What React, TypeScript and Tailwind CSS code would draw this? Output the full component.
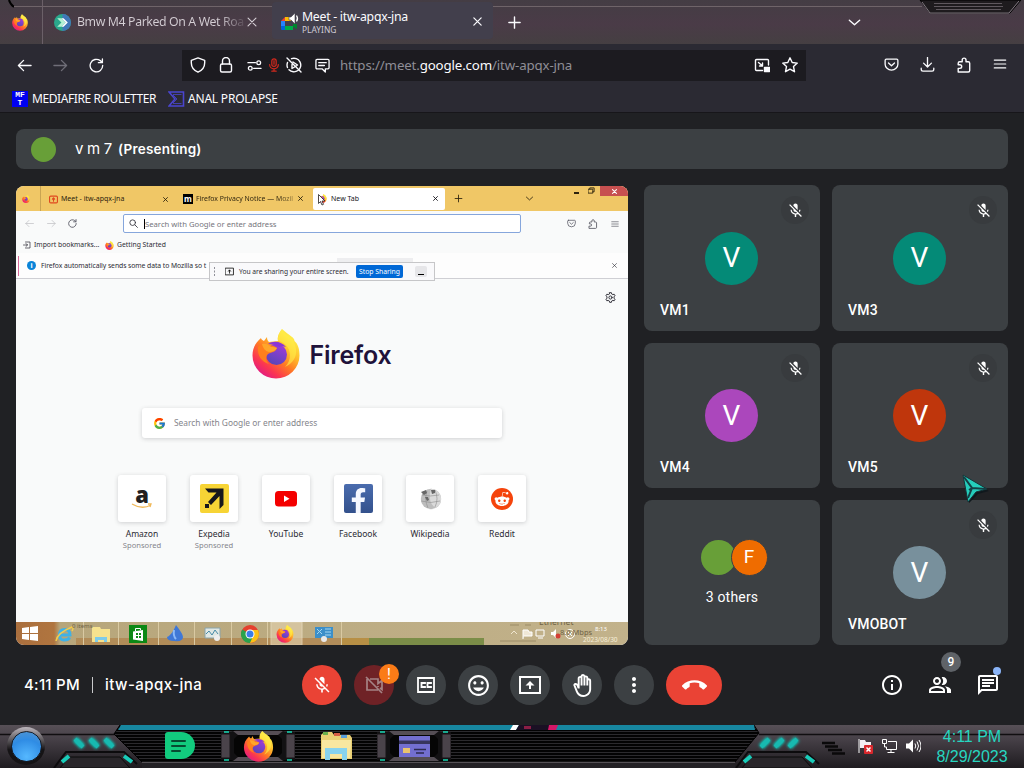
import { useId, type ReactNode } from 'react'
import {
  MdCallEnd,
  MdMicOff,
  MdMoreVert,
  MdOutlineBackHand,
  MdOutlineChat,
  MdOutlineInfo,
  MdOutlineMood,
  MdOutlinePeopleAlt,
} from 'react-icons/md'
import { FcGoogle } from 'react-icons/fc'
import { FaFacebookF, FaRedditAlien } from 'react-icons/fa'

function Stroke({ size = 16, width = 1.4, className, children }: { size?: number; width?: number; className?: string; children: ReactNode }) {
  return (
    <svg
      width={size}
      height={size}
      viewBox="0 0 16 16"
      fill="none"
      stroke="currentColor"
      strokeWidth={width}
      strokeLinecap="round"
      strokeLinejoin="round"
      className={`shrink-0 ${className ?? ''}`}
    >
      {children}
    </svg>
  )
}

const glyphs = {
  back: <path d="M15 8H1.5M7 2.5 1.5 8 7 13.5" />,
  forward: <path d="M1 8h13.5M9 2.5 14.5 8 9 13.5" />,
  reload: <path d="M14.6 8A6.7 6.7 0 1 1 12 2.8l2 1.7M14.3 1v4H10" />,
  close: <path d="m3.5 3.5 9 9m0-9-9 9" />,
  plus: <path d="M8 2v12M2 8h12" />,
  chevron: <path d="m2.5 5.5 5.5 5 5.5-5" />,
  menu: <path d="M1.5 3.500h13M1.500 8h13M1.500 12.500h13" />,
  shield: <path d="M8 .9 1.300 3.300v2.500c0 4.400 2.500 7.600 6.700 9.400 4.200-1.800 6.700-5 6.700-9.400V3.300z" />,
  pocket: (
    <>
      <path d="M2.500 2.300h11c.8 0 1.300.5 1.300 1.300v4a6.800 6.300 0 0 1-13.600 0v-4c0-.8.5-1.300 1.300-1.300z" />
      <path d="M4.800 6.300 8 9.300l3.200-3" />
    </>
  ),
  download: <path d="M8 .5v10M3.800 6.500 8 10.700l4.200-4.200M1.300 12v1c0 1.200.7 2 1.900 2h9.600c1.200 0 1.900-.8 1.900-2v-1" />,
  puzzle: (
    <path d="M2.200 15h10c.9 0 1.500-.6 1.500-1.500V6.300c0-.9-.6-1.500-1.500-1.500H10V3a1.900 1.900 0 0 0-3.800 0v1.800H3.700c-.9 0-1.500.6-1.500 1.500v1.500h1.700a1.800 1.800 0 0 1 0 3.600H2.200z" />
  ),
  search: (
    <>
      <circle cx="6.500" cy="6.500" r="5" />
      <path d="m10.500 10.500 4.500 4.500" />
    </>
  ),
}

function FirefoxLogo({ width, height }: { width: number; height: number }) {
  const id = useId()
  return (
    <svg width={width} height={height} viewBox="0 0 48 50" className="shrink-0">
      <defs>
        <linearGradient id={`${id}a`} x1=".85" y1=".1" x2=".2" y2=".95">
          <stop offset="0" stopColor="#fff44f" />
          <stop offset=".3" stopColor="#ffc02c" />
          <stop offset=".55" stopColor="#ff7a24" />
          <stop offset=".8" stopColor="#fb3650" />
          <stop offset="1" stopColor="#e01a86" />
        </linearGradient>
        <linearGradient id={`${id}b`} x1=".8" y1="0" x2=".3" y2="1">
          <stop offset="0" stopColor="#a33bd9" />
          <stop offset="1" stopColor="#5446b8" />
        </linearGradient>
      </defs>
      <path
        fill={`url(#${id}a)`}
        d="M9 9C3 14 .5 20 .5 26.500a23.500 23 0 0 0 47 0C47.500 20 46 15 42.500 12c0-4-5-5-12.500-12-3 4-5 7-4 12l-9 1c-1-1-2-2-2-5l-3 4c-2-1-3-2-3-3z"
      />
      <path fill="#fff04a" opacity=".6" d="M30 0c-3 4-5 8-4 12 7 1 12 7 12 14 0 5-2 9-5 12 8-4 12-10 11-18-1-5-2-8-4-10C35 6 31 4 30 0z" />
      <ellipse cx="24.500" cy="25.500" rx="10.500" ry="10.500" fill={`url(#${id}b)`} />
      <path fill="#8b35d6" d="M16 15c6-4 14-2 18 3-3-1-5-1-7 0-4-2-8-3-11-3z" />
      <path fill="#ff7f1c" d="M6 18c4-4 8-3 12-1 3-1 4 0 7 2-1 4-5 4-9 6-3 3-2 7 1 10-7-2-12-8-11-17z" />
      <path fill="#ffa62a" d="M10 15c4-1 7 1 9 3 2 0 5 0 6 1-2 3-5 4-8 4-4-1-6-4-7-8z" />
    </svg>
  )
}

/* Outer browser */

function TabStrip() {
  return (
    <div className="relative flex h-11 items-center bg-[linear-gradient(#443d44,#4a3b47_55%,#453f42)] text-[#fbfbfe]">
      <svg className="absolute inset-0" width="1024" height="44">
        <path d="M9 0q1 4 5 7" stroke="#000" strokeWidth="2" fill="none" />
        <path d="M14 6.500h258M492 6.500h430" stroke="#6f6469" />
        <path d="M920 0l10 13h80l11-13z" fill="#1e1b1e" stroke="#000" />
        <path d="M922 2l8 11h79l10-12" stroke="#837a82" fill="none" />
        <path d="M934 3.500h68M934 6.500h69M936 9.500h65" stroke="#5f585e" />
      </svg>
      <div className="relative flex h-11 w-[43px] items-center justify-center border-r border-[#6b6068] pr-[2px]">
        <FirefoxLogo width={16} height={17} />
      </div>
      <div className="relative ml-[11px] flex h-11 w-[218px] items-center">
        <svg width="17" height="17" viewBox="0 0 16 16">
          <circle cx="8" cy="8" r="8" fill="#2aa88c" />
          <path d="M8 0a8 8 0 0 1 0 16z" fill="#4177b8" />
          <path d="M3 4h4l4 4-4 4H3l4-4z" fill="#b5f0d4" />
          <path d="M7 4h2l4 4-4 4H7l4-4z" fill="#fff" />
        </svg>
        <span className="ml-[6px] w-[167px] whitespace-nowrap bg-[linear-gradient(90deg,#d5cfd5_85%,#d5cfd520)] bg-clip-text text-[12.300px] tracking-[-0.380px] text-transparent">
          Bmw M4 Parked On A Wet Roa
        </span>
        <Stroke size={14} width={1.300} className="ml-px text-[#d5cfd5]">{glyphs.close}</Stroke>
      </div>
      <div className="relative mb-1 flex h-[37px] w-[221px] items-center rounded bg-[#423f4c] pl-2">
        <svg width="20" height="18" viewBox="0 0 20 18" className="mt-[3px]">
          <path d="M1 8l4-4v4z" fill="#ea4335" />
          <path d="M5 4h6v4H5z" fill="#fbbc04" />
          <path d="M1 8h4v5H1z" fill="#2684fc" />
          <path d="M1 13h4v4H2q-1 0-1-1z" fill="#0066da" />
          <path d="M5 13h8v4H5z" fill="#00ac47" />
          <path d="M13 11l4 0v5l-4-2z" fill="#00832d" />
          <path d="M9 4h2l4-4v11l-4-4H9z" fill="#fff" stroke="#423f4c" strokeWidth=".6" />
          <path d="M16.500 2.500q2 3 0 6" stroke="#fff" strokeWidth="1.300" fill="none" />
        </svg>
        <div className="ml-[2px] flex-1 pt-[5px]">
          <p className="text-[12.300px] leading-[15px] tracking-[-0.280px]">Meet - itw-apqx-jna</p>
          <p className="text-[8.400px] leading-[12px] text-[#cfcbd6]">PLAYING</p>
        </div>
        <Stroke size={13} width={1.500} className="mr-[9px] mt-[3px]">{glyphs.close}</Stroke>
      </div>
      <Stroke size={15} width={1.500} className="relative ml-[14px] mt-px">{glyphs.plus}</Stroke>
      <Stroke size={15} width={1.500} className="relative ml-[325px]">{glyphs.chevron}</Stroke>
    </div>
  )
}

function NavBar() {
  return (
    <div className="flex h-[42px] items-center bg-[#2b2a33] px-[6px] text-[#fbfbfe]">
      <div className="flex w-9 justify-center"><Stroke size={15}>{glyphs.back}</Stroke></div>
      <div className="flex w-9 justify-center text-[#6f6e78]"><Stroke size={15}>{glyphs.forward}</Stroke></div>
      <div className="flex w-9 justify-center"><Stroke size={15}>{glyphs.reload}</Stroke></div>
      <div className="ml-[68px] flex h-[31px] w-[624px] items-center bg-[#1c1b20]">
        <div className="flex w-8 justify-center"><Stroke>{glyphs.shield}</Stroke></div>
        <div className="flex w-6 justify-center">
          <Stroke><rect x="2.500" y="7" width="11" height="8" rx="1.500" /><path d="M4.500 7V4a3.500 3.500 0 0 1 7 0v3" /></Stroke>
        </div>
        <div className="flex w-8 justify-center">
          <Stroke size={15}><path d="M1 5h8M7 11h8" /><circle cx="12.500" cy="5" r="2" /><circle cx="3.500" cy="11" r="2" /></Stroke>
        </div>
        <div className="flex w-2 justify-center text-[#d0281c]">
          <Stroke size={14}><rect x="5.500" y="1" width="5" height="8.500" rx="2.500" /><path d="M3 7.500a5 5 0 0 0 10 0M8 12.500V15M5.500 15h5M8 3v4" /></Stroke>
        </div>
        <div className="flex w-8 justify-center">
          <Stroke size={16}><path d="M1 1l14 14M5.500 1.700A6.800 6.800 0 1 1 3 12.700M1.500 5.500a7 7 0 0 0 0 5M7 5l4.500 3-1.500 1M6 7.500v4l2.500-1.500" /></Stroke>
        </div>
        <div className="flex w-6 justify-center">
          <Stroke size={15}><path d="M2.200 1.500h11.600c.7 0 1.200.5 1.200 1.200v7.600c0 .7-.5 1.200-1.200 1.200H11V15l-3.500-3.500H2.200c-.7 0-1.200-.5-1.200-1.200V2.700c0-.7.5-1.200 1.200-1.200zM4 5h8M4 8h6" /></Stroke>
        </div>
        <p className="ml-[6px] flex-1 pt-px text-[13.300px] tracking-[-0.150px] text-[#8f8e96]">
          https://meet.<span className="text-[#fbfbfe]">google.com</span>/itw-apqx-jna
        </p>
        <div className="flex w-7 justify-center">
          <Stroke><path d="M8.500 13.500h-6c-.6 0-1-.4-1-1v-9c0-.6.4-1 1-1h11c.6 0 1 .4 1 1V8M4.500 5.500 8.500 9M8.500 6v3H5.500" /><rect x="10.500" y="10.500" width="5" height="4" fill="currentColor" /></Stroke>
        </div>
        <div className="mr-[2px] flex w-7 justify-center">
          <Stroke><path d="m8 .8 2.200 4.700 5.100.6-3.800 3.500 1 5.100L8 12.200l-4.500 2.500 1-5.100L.7 6.100l5.100-.6z" /></Stroke>
        </div>
      </div>
      <div className="ml-auto flex pb-px">
        <div className="flex w-9 justify-center pr-px"><Stroke size={15}>{glyphs.pocket}</Stroke></div>
        <div className="flex w-9 justify-center pr-px"><Stroke size={15}>{glyphs.download}</Stroke></div>
        <div className="flex w-9 justify-center"><Stroke>{glyphs.puzzle}</Stroke></div>
        <div className="flex w-9 justify-center"><Stroke size={14}>{glyphs.menu}</Stroke></div>
      </div>
    </div>
  )
}

function BookmarksBar() {
  return (
    <div className="flex h-[27px] items-center border-b border-[#17161a] bg-[#2b2a33] pl-3 text-[12px] text-[#fbfbfe]">
      <div className="h-4 w-4 bg-[#0000f0] text-center font-['Liberation_Mono'] text-[8px] font-bold leading-[8px]">
        <p className="leading-[8px]">MF</p>
        <p className="leading-[8px]">T</p>
      </div>
      <span className="ml-1 w-[136px] whitespace-nowrap tracking-[-0.410px]">MEDIAFIRE ROULETTER</span>
      <svg width="17" height="16" viewBox="0 0 17 16" fill="none" stroke="#4a45cf" strokeWidth="1.600">
        <path d="M1 1h14.500v14H1l6-7z" />
        <path d="M5 3.500h8.500M5 12.500h8.500M5 4l4 4-4 4" strokeWidth=".8" />
      </svg>
      <span className="ml-[3px] whitespace-nowrap tracking-[-0.200px]">ANAL PROLAPSE</span>
    </div>
  )
}

/* Shared screen */

function SharedTabs() {
  return (
    <div className="flex h-[25px] items-center bg-[#f0c766] text-[6.800px] text-[#2c220d]">
      <div className="flex h-full w-[25px] items-center justify-center border-r border-[#c9a452] pr-1">
        <FirefoxLogo width={8} height={8} />
      </div>
      <div className="flex w-[142px] items-center pl-2 pt-px">
        <Stroke size={9} width={2} className="text-[#e0491f]"><rect x="1" y="2" width="14" height="12" rx="2" /><path d="M8 11V6M6 7.500 8 5l2 2.500" /></Stroke>
        <span className="ml-[3px] flex-1 whitespace-nowrap text-[7px]">Meet - itw-apqx-jna</span>
        <Stroke size={7} width={2} className="mr-[14px]">{glyphs.close}</Stroke>
      </div>
      <div className="flex w-[130px] items-center pt-px">
        <span className="flex h-[10px] w-[10px] items-center justify-center bg-black text-[8px] font-bold leading-none text-white">m</span>
        <span className="ml-[3px] w-[101px] whitespace-nowrap bg-[linear-gradient(90deg,#2c220d_80%,#2c220d50)] bg-clip-text text-[6.900px] text-transparent">
          Firefox Privacy Notice — Mozil
        </span>
        <Stroke size={7} width={2}>{glyphs.close}</Stroke>
      </div>
      <div className="flex h-[22px] w-[132px] items-center rounded-[2px] bg-white pl-[5px] text-[#15141a]">
        <span className="relative flex w-[9px]">
          <FirefoxLogo width={9} height={9} />
          <svg className="absolute left-0 top-0" width="8" height="12" viewBox="0 0 8 12">
            <path d="M.5.5v9l2-2 1.500 3.500 1.500-.7L4 7h3z" fill="#fff" stroke="#222" strokeWidth=".8" />
          </svg>
        </span>
        <span className="ml-1 flex-1 whitespace-nowrap pt-px text-[7px]">New Tab</span>
        <Stroke size={7} width={2} className="mr-[6px]">{glyphs.close}</Stroke>
      </div>
      <Stroke size={9} width={1.500} className="ml-[9px]">{glyphs.plus}</Stroke>
      <Stroke size={9} width={1.500} className="ml-[62px]">{glyphs.chevron}</Stroke>
      <div className="ml-auto flex h-full items-start">
        <span className="mr-[9px] mt-[6px] h-[1.500px] w-[5px] bg-[#2c220d]" />
        <Stroke size={7} width={2} className="mr-[5px] mt-[1px]"><path d="M1 5h10v9H1zM4 5V2h10v9h-3" /></Stroke>
        <span className="flex h-[10px] w-[28px] items-center justify-center bg-[#c75050] text-white">
          <Stroke size={7} width={2.500}>{glyphs.close}</Stroke>
        </span>
      </div>
    </div>
  )
}

function SharedToolbar() {
  return (
    <div className="flex h-[25px] items-center text-[#5b5b66]">
      <Stroke size={9} className="ml-[9px] text-[#c4c4c8]">{glyphs.back}</Stroke>
      <Stroke size={9} className="ml-[13px] text-[#c4c4c8]">{glyphs.forward}</Stroke>
      <Stroke size={9} width={1.600} className="ml-[12px]">{glyphs.reload}</Stroke>
      <div className="ml-[46px] flex h-[19px] w-[398px] items-center rounded-[2px] border-[1.500px] border-[#86a6dc] bg-white pl-[5px]">
        <Stroke size={9} width={1.600} className="text-[#3b3b44]">{glyphs.search}</Stroke>
        <span className="ml-[6px] border-l border-black text-[7.700px] leading-[10px] text-[#75757c]">Search with Google or enter address</span>
      </div>
      <Stroke size={9} className="ml-[46px]">{glyphs.pocket}</Stroke>
      <Stroke size={10} className="ml-[12px]">{glyphs.puzzle}</Stroke>
      <Stroke size={8} className="ml-[13px]">{glyphs.menu}</Stroke>
    </div>
  )
}

function SharedNotices() {
  return (
    <>
      <div className="flex h-[17px] items-center pt-px text-[6.800px] text-[#2b2a33]">
        <Stroke size={8} className="ml-[7px]"><path d="M5 2h9v12H5M1 8h8M6 5l3 3-3 3" /></Stroke>
        <span className="ml-[3px] w-[66px] whitespace-nowrap">Import bookmarks...</span>
        <span className="ml-[5px]"><FirefoxLogo width={9} height={9} /></span>
        <span className="ml-[3px] whitespace-nowrap">Getting Started</span>
      </div>
      <div className="relative flex h-[26px] items-center border-b border-[#cfcfd4] bg-[#fdfdfd] text-[6.800px] text-[#2b2a33]">
        <span className="ml-[2px] h-[20px] w-px bg-[#d86a9a]" />
        <span className="ml-[8px] flex h-[9px] w-[9px] items-center justify-center rounded-full bg-[#0a84d8] text-[7px] font-bold leading-none text-white">i</span>
        <span className="ml-[5px] whitespace-nowrap pt-px tracking-[-0.060px]">Firefox automatically sends some data to Mozilla so t</span>
        <Stroke size={7} className="ml-auto mr-[10px]">{glyphs.close}</Stroke>
        <span className="absolute left-[321px] top-[5px] h-1 w-[76px] bg-[#eeeef0]" />
        <div className="absolute left-[193px] top-[9px] flex h-[19px] w-[226px] items-center border border-[#c6c6c8] bg-[#f9f9fb]">
          <svg width="8" height="9" className="ml-px fill-[#8f8f98]"><path d="M3 0h1v2H3zM3 3.500h1v2H3zM3 7h1v2H3z" /></svg>
          <Stroke size={9} className="ml-[6px] text-black"><rect x="1" y="2" width="14" height="12" /><path d="M8 11V6M6 7.500 8 5l2 2.500" /></Stroke>
          <span className="ml-[5px] w-[111px] whitespace-nowrap pt-px text-[6.700px]">You are sharing your entire screen.</span>
          <span className="ml-[6px] flex h-[13px] w-[47px] items-center justify-center whitespace-nowrap rounded-[2px] bg-[#0068d6] pt-px text-white">Stop Sharing</span>
          <span className="ml-[12px] flex h-[11px] w-[12px] items-end justify-center rounded-[2px] bg-[#e6e6e9] pb-[2px]"><i className="h-px w-[6px] bg-black" /></span>
        </div>
      </div>
    </>
  )
}

const shortcuts = [
  {
    name: 'Amazon',
    sponsored: true,
    icon: (
      <span className="flex h-[24px] w-[24px] flex-col items-center">
        <span className="font-['Open_Sans'] text-[22px] font-extrabold leading-[15px] text-[#221f1f]">a</span>
        <svg width="22" height="6" className="mt-px"><path d="M1 1q10 6 19 1M17 1h3l-1 3" stroke="#f0b95a" strokeWidth="1.300" fill="none" /></svg>
      </span>
    ),
  },
  {
    name: 'Expedia',
    sponsored: true,
    icon: (
      <svg width="29" height="29" viewBox="0 0 29 29">
        <rect width="29" height="29" rx="2" fill="#f7d435" />
        <path d="M5 4.500h18.500V21L19.500 25V12L11 21l-3-3 8.500-9.500H8.500zM5 20h4v4H5z" fill="#17171c" />
      </svg>
    ),
  },
  {
    name: 'YouTube',
    icon: (
      <svg width="22" height="16" viewBox="0 0 22 16"><rect width="22" height="15.500" rx="3.500" fill="#f40000" /><path d="M9 4.500v6.500l5.500-3.200z" fill="#fff" /></svg>
    ),
  },
  {
    name: 'Facebook',
    icon: (
      <span className="flex h-[29px] w-[29px] items-end justify-end rounded-[2px] bg-[linear-gradient(#4a6cae,#33518c)] pr-[2px] text-[#f4f7ff]">
        <FaFacebookF size={25} />
      </span>
    ),
  },
  {
    name: 'Wikipedia',
    icon: (
      <svg width="23" height="22" viewBox="0 0 23 22">
        <circle cx="12" cy="11" r="10.200" fill="#bdbdbd" />
        <path d="M12 .8a10.200 10.200 0 0 1 5 19c-5-2-8-9-5-19z" fill="#dadada" />
        <path d="M3 7q8 2 17 0M2 13q10 3 19 0M8 3q-3 8 1 17M16 2q4 9 0 17" stroke="#8d8d8d" strokeWidth=".6" fill="none" />
        <path d="M2 4l5-2 1 3-3 2zM12 2l4 0 0 3-3 1zM6 9l3 0 1 3-2 1z" fill="#666" />
      </svg>
    ),
  },
  {
    name: 'Reddit',
    icon: (
      <span className="flex h-[22px] w-[22px] items-center justify-center rounded-full bg-[#f5440c] text-white"><FaRedditAlien size={16} /></span>
    ),
  },
]

function NewTabPage() {
  return (
    <div className="flex h-[343px] flex-col items-center bg-[#f9fafa]">
      <div className="mt-[13px] flex w-full justify-end pr-[12px]">
        <Stroke size={11} className="text-[#2b2a33]">
          <circle cx="8" cy="8" r="2.300" />
          <path d="M6.700 1h2.600l.5 2 1.500.8 2-.6 1.300 2.300-1.500 1.500v2l1.500 1.500-1.300 2.300-2-.6-1.500.8-.5 2H6.700l-.5-2-1.500-.8-2 .6-1.300-2.300L2.900 9V7L1.400 5.500l1.300-2.300 2 .6L6.200 3z" />
        </Stroke>
      </div>
      <div className="mt-[26px] flex items-center">
        <FirefoxLogo width={48} height={50} />
        <span className="ml-[9px] pt-1 font-['Inter'] text-[25px] font-semibold tracking-[-0.200px] text-[#20123a]">Firefox</span>
      </div>
      <div className="mt-[29px] flex h-[30px] w-[360px] items-center rounded-[3px] bg-white pl-[11px] shadow-[0_1px_4px_rgba(58,57,68,0.22)]">
        <FcGoogle size={13} />
        <span className="ml-[8px] pt-px text-[8.400px] text-[#85858c]">Search with Google or enter address</span>
      </div>
      <div className="mt-[37px] flex gap-6 text-[#2b2a33]">
        {shortcuts.map((site) => (
          <div key={site.name} className="flex w-12 flex-col items-center">
            <div className="flex h-[47px] w-12 items-center justify-center rounded-[3px] bg-white shadow-[0_1px_4px_rgba(58,57,68,0.22)]">{site.icon}</div>
            <p className="mt-[6px] text-[8.500px] leading-[12px]">{site.name}</p>
            {site.sponsored && <p className="text-[7.600px] leading-[11px] text-[#85858c]">Sponsored</p>}
          </div>
        ))}
      </div>
    </div>
  )
}

function SharedTaskbar() {
  return (
    <div className="relative flex h-[23px] items-center bg-[linear-gradient(90deg,#aa6f3e,#b0753f_38px,#b7a67b_44px,#c2b28b)]">
      <svg className="absolute inset-0" width="612" height="23">
        <path d="M60 16h265v7H60z" fill="#ae8049" opacity=".7" />
        <path d="M325 16h30v7h-30z" fill="#b78f45" />
        <path d="M353 16h115v7H353z" fill="#7b8d48" />
        <path d="M67.500 0v23M102.500 0v23M142.500 0v23M178.500 0v23M215.500 0v23M251.500 0v23M325.500 0v23" stroke="#d9c9a2" />
        <path d="M255 0h31v23h-31z" fill="#e5d4b2" opacity=".6" stroke="#f8edd5" />
      </svg>
      <div className="relative flex h-full w-[325px] items-center">
        <svg width="16" height="15" viewBox="0 0 16 15" className="ml-[6px] fill-white"><path d="M0 2l7-1v6H0zM8 1l8-1v7H8zM0 8h7v6l-7-1zM8 8h8v7l-8-1z" /></svg>
        <svg width="19" height="18" viewBox="0 0 19 18" className="ml-[17px]" fill="none">
          <path d="M4.500 10h10.500q0-5.500-5.300-5.500T4.500 10t5.200 5q3.500 0 5-2.500" stroke="#3fb2e6" strokeWidth="3" />
          <path d="M1 16Q2 8 17 2q2 1 0 4" stroke="#f2cc4d" strokeWidth="1.500" />
        </svg>
        <svg width="20" height="18" viewBox="0 0 20 18" className="ml-[17px]"><path d="M1 2h8l1 2h9v13H1z" fill="#f6e28e" /><path d="M4 12h12v5h-3v-2H7v2H4z" fill="#7ecbe8" /></svg>
        <svg width="18" height="18" viewBox="0 0 18 18" className="ml-[18px]">
          <path d="M0 0h18v18H0z" fill="#0c8815" /><path d="M4 6.500l10-1.500v11l-10-1.500z" fill="#fff" /><path d="M6.500 6V3.500h5V5" stroke="#fff" fill="none" /><path d="M7 8h2v2H7zM10 8h2v2h-2zM7 11h2v2H7zM10 11h2v2h-2z" fill="#0c8815" />
        </svg>
        <svg width="17" height="17" viewBox="0 0 17 17" className="ml-[20px]"><path d="M9 0q7 9 7 12 0 5-9 4-7 0-7-4 5-2 9-12z" fill="#3f78d6" /><path d="M7 5q-1 6 2 9" stroke="#8ab9f8" strokeWidth="2" fill="none" /></svg>
        <svg width="18" height="16" viewBox="0 0 18 16" className="ml-[20px]"><path d="M1 2h15v10H1z" fill="#dfe7e4" stroke="#8aa4ab" /><path d="M2 8l3-3 3 4 3-5 3 4" stroke="#478ba8" fill="none" /><circle cx="13" cy="12" r="3" fill="#eee" /></svg>
        <svg width="18" height="18" viewBox="0 0 18 18" className="ml-[19px]">
          <circle cx="9" cy="9" r="9" fill="#e5402e" /><path d="M1.200 4.500A9 9 0 0 0 9 18l4-7z" fill="#2ba24c" /><path d="M17 5a9 9 0 0 1-8 13l4-9-3-4z" fill="#fbc116" /><circle cx="9" cy="9" r="4.500" fill="#fff" /><circle cx="9" cy="9" r="3.500" fill="#3b7de8" />
        </svg>
        <span className="ml-[17px]"><FirefoxLogo width={18} height={18} /></span>
        <svg width="20" height="18" viewBox="0 0 20 18" className="ml-[20px]"><path d="M1 2h18v11H1z" fill="#3c8fc9" /><path d="M3 4l5 5M8 4l-5 5M11 4h6M11 7h6M11 10h6" stroke="#a5d7f0" strokeWidth="1" /><circle cx="10" cy="14" r="3" fill="#e9e9e9" /></svg>
      </div>
      <div className="relative ml-auto flex h-full w-[130px] overflow-hidden">
        <svg className="absolute inset-0" width="130" height="23" fill="none">
          <path d="M12 3h9M27 3h6M2 19h36" stroke="#9c8c66" />
          <path d="M13 12l3-3 3 3" stroke="#efe6cf" />
          <path d="M25 17V8h5l1 2h3v4h-8" stroke="#fff" fill="#efe7d6" /><path d="M38 8h8v6h-8zM40 16h5" stroke="#fff" />
          <path d="M53 10h2l3-3v9l-3-3h-2z" fill="#fff" /><circle cx="60" cy="14" r="2.500" fill="#d33f35" />
          <circle cx="72" cy="12" r="4.500" stroke="#fff" /><path d="M70 10l4 4M74 10l-4 4" stroke="#fff" />
        </svg>
        <span className="absolute left-[41px] top-[-5px] text-[8.500px] leading-[10px] text-[#6f6346]">Ethernet</span>
        <span className="absolute left-[62px] top-[5px] whitespace-nowrap text-[7.500px] leading-[10px] text-[#6f6346]">8.0 Mbps</span>
        <span className="absolute left-[97px] top-[3px] text-[6px] leading-[9px] text-white">8:13</span>
        <span className="absolute left-[85px] top-[13px] text-[6.500px] leading-[9px] text-[#f7efd9]">2023/08/30</span>
      </div>
      <span className="absolute left-[56px] top-0 text-[6px] leading-[8px] text-[#6f6346]">0 items</span>
    </div>
  )
}

/* Call */

const participants = [
  { name: 'VM1', color: 'bg-[#048a77]' },
  { name: 'VM3', color: 'bg-[#048a77]' },
  { name: 'VM4', color: 'bg-[#ab47bc]' },
  { name: 'VM5', color: 'bg-[#bf360c]' },
  { name: 'others', color: '' },
  { name: 'VMOBOT', color: 'bg-[#78909c]' },
]

function ParticipantTile({ name, color }: { name: string; color: string }) {
  if (name === 'others') {
    return (
      <div className="flex flex-col items-center rounded-lg bg-[#3c4043] pt-[39px] text-[14px] text-white">
        <div className="flex pl-1">
          <span className="mt-px h-[35px] w-[35px] rounded-full bg-[#689f38]" />
          <span className="-ml-[5px] flex h-[37px] w-[37px] items-center justify-center rounded-full border border-[#3c4043] bg-[#ef6c00] text-[19px]">F</span>
        </div>
        <p className="mt-[11px] leading-5 tracking-[0.200px]">3 others</p>
      </div>
    )
  }
  return (
    <div className="relative flex items-center justify-center rounded-lg bg-[#3c4043] pr-px text-white">
      <span className={`flex h-[53px] w-[53px] items-center justify-center rounded-full text-[28px] ${color}`}>V</span>
      <span className="absolute right-[11px] top-[11px] flex h-7 w-7 items-center justify-center rounded-full bg-[#383b3e]"><MdMicOff size={17} /></span>
      <span className="absolute bottom-[11px] left-4 text-[14px] font-medium leading-5 tracking-[0.200px]">{name}</span>
    </div>
  )
}

function RoundButton({ children, className = 'bg-[#3c4043] text-white' }: { children: ReactNode; className?: string }) {
  return <div className={`relative flex h-10 w-10 items-center justify-center rounded-full ${className}`}>{children}</div>
}

function CallControls() {
  return (
    <div className="flex h-20 items-center text-white">
      <div className="flex w-[302px] items-center pl-6 font-['Inter'] text-[15px] font-medium">
        <span className="w-[56px] whitespace-nowrap tracking-[0.250px]">4:11 PM</span>
        <span className="ml-[12px] h-4 w-px bg-[#c9cacc]" />
        <span className="ml-[12px] whitespace-nowrap tracking-[0.450px]">itw-apqx-jna</span>
      </div>
      <div className="flex gap-3">
        <RoundButton className="bg-[#ea4335]"><MdMicOff size={20} /></RoundButton>
        <RoundButton className="bg-[#6f2226] text-[#a58385]">
          <svg width="20" height="20" viewBox="0 0 20 20" fill="none" stroke="currentColor" strokeWidth="1.700"><path d="M2 2l16 16M6 4h8v4.500l4-3v9l-2-1.500M14 12v-1M3 4v11h11" /></svg>
          <span className="absolute -right-[5px] -top-[1px] flex h-5 w-5 items-center justify-center rounded-full bg-[#fa7b17] text-[15px] leading-none text-white">!</span>
        </RoundButton>
        <RoundButton>
          <svg width="20" height="18" viewBox="0 0 20 18" fill="none" stroke="currentColor" strokeWidth="1.800"><path d="M2 2h16v14H2z" /><path d="M9 8V7H5.500v4H9v-1M15 8V7h-3.500v4H15v-1" /></svg>
        </RoundButton>
        <RoundButton><MdOutlineMood size={25} /></RoundButton>
        <RoundButton>
          <svg width="24" height="20" viewBox="0 0 24 20"><path d="M2 2h20v16H2z" fill="none" stroke="currentColor" strokeWidth="2" /><path d="M12 6l4.500 4.500H13V14h-2v-3.500H7.500z" fill="currentColor" /></svg>
        </RoundButton>
        <RoundButton><MdOutlineBackHand size={23} /></RoundButton>
        <RoundButton><MdMoreVert size={24} /></RoundButton>
        <div className="flex h-10 w-14 items-center justify-center rounded-full bg-[#ea4335]"><MdCallEnd size={25} /></div>
      </div>
      <div className="ml-auto mr-6 flex gap-6">
        <MdOutlineInfo size={24} />
        <span className="relative">
          <MdOutlinePeopleAlt size={24} />
          <span className="absolute -top-[21px] left-[13px] flex h-5 w-5 items-center justify-center rounded-full bg-[#5f6368] text-[12px] font-medium">9</span>
        </span>
        <span className="relative">
          <MdOutlineChat size={24} />
          <span className="absolute -right-[1px] -top-[6px] h-2 w-2 rounded-full bg-[#8ab4f8]" />
        </span>
      </div>
    </div>
  )
}

function MeetPage() {
  return (
    <main className="h-[612px] bg-[#202124] px-4 pt-4 font-['Roboto',sans-serif]">
      <div className="flex h-10 items-center rounded-lg bg-[#3c4043] pl-[15px] font-['Inter',sans-serif] text-white">
        <span className="h-[25px] w-[25px] rounded-full bg-[#689f38]" />
        <span className="ml-[19px] w-[43px] text-[15px] tracking-[-0.300px]">v m 7</span>
        <span className="text-[13.500px] font-semibold tracking-[0.250px]">(Presenting)</span>
      </div>
      <div className="mt-4 flex h-[460px] gap-4">
        <section className="mt-px h-[459px] w-[612px] overflow-hidden rounded-lg bg-[#f9fafa] font-['Noto_Sans',sans-serif]">
          <SharedTabs />
          <SharedToolbar />
          <SharedNotices />
          <NewTabPage />
          <SharedTaskbar />
        </section>
        <section className="grid w-[364px] grid-cols-2 grid-rows-[146px_145px_145px] gap-3">
          {participants.map((p) => (
            <ParticipantTile key={p.name} {...p} />
          ))}
        </section>
      </div>
      <div className="-mx-4"><CallControls /></div>
    </main>
  )
}

/* Desktop */

function TaskFrame({ children }: { children: ReactNode }) {
  return (
    <div className="relative flex h-8 w-[74px] items-center justify-center">
      <svg className="absolute inset-0" width="74" height="32">
        <path d="M0 2h10l5-2h44l5 2h10v28H64l-5 2H15l-5-2H0z" fill="#121113" />
        <path d="M0 4h9v24H0zM65 4h9v24h-9z" fill="#4a434a" stroke="#171517" />
        <path d="M12 1h50l-5 4H17zM12 31h50l-5-4H17z" fill="#554e55" />
        <path d="M17 5h40l4 4v14l-4 4H17l-4-4V9z" fill="#050505" />
        <path d="M3 2h5M66 2h5M3 30h5M66 30h5" stroke="#18d8b4" strokeWidth="1.500" />
      </svg>
      <span className="relative">{children}</span>
    </div>
  )
}

function TaskbarSkin() {
  return (
    <svg className="absolute inset-0" width="1024" height="43">
      <defs>
        <linearGradient id="panel" x1="0" y1="0" x2="0" y2="1">
          <stop offset="0" stopColor="#575057" />
          <stop offset=".35" stopColor="#453f46" />
          <stop offset="1" stopColor="#1e1b1f" />
        </linearGradient>
        <pattern id="slats" width="4" height="3" patternUnits="userSpaceOnUse">
          <path d="M0 0h4v3H0z" fill="#030303" />
          <path d="M0 0h4v1H0z" fill="#2b2a2d" />
        </pattern>
        <filter id="glow" x="-50%" y="-50%" width="200%" height="200%"><feGaussianBlur stdDeviation="1.500" /></filter>
      </defs>
      <path d="M0 0h1024v43H0z" fill="url(#panel)" />
      <path d="M0 9.500h116M759 9.500h265" stroke="#100e10" strokeWidth="1.500" />
      <path d="M120 0h634l5 8-24 29H142L114 9z" fill="url(#slats)" stroke="#000" />
      <path d="M121 0h633l1 5H118z" fill="#1787a0" />
      <path d="M142 37.500h593" stroke="#555156" />
      <path d="M142 38h593v5H142z" fill="#232125" />
      <path d="M513 0h6l-3 5h-6z" fill="#fff" /><path d="M519 0h30v5h-33z" fill="#1b1024" /><path d="M524 1h7v3h-7z" fill="#8b1e45" /><path d="M549 0h9l-2 5h-8z" fill="#d41767" />
      {[0, 682].map((x) => (
        <g key={x} transform={`translate(${x} 0)`}>
          <path d="M54 43l12-16h58l13 12" stroke="#0c0b0d" fill="none" strokeWidth="2" />
          <path d="M60 43l9-11h51l10 11z" fill="#29262a" stroke="#0b0a0b" />
          <path d="M62 37l7-6M124 31l8 6" stroke="#19ccb9" strokeWidth="4" />
        </g>
      ))}
      <path d="M75 14l8 8M90 14l8 8M105 14l8 8M769 14l-8 8M783 14l-8 8M797 14l-8 8" stroke="#00e5d2" strokeWidth="6" filter="url(#glow)" />
      <path d="M75 14l8 8M90 14l8 8M105 14l8 8M769 14l-8 8M783 14l-8 8M797 14l-8 8" stroke="#18b9b0" strokeWidth="4" />
      <path d="M822 18h13M825 21.500h13M828 25h14M832 28.500h13" stroke="#0a090a" strokeWidth="2.500" />
    </svg>
  )
}

function Taskbar() {
  return (
    <footer className="relative flex h-[43px] overflow-hidden">
      <TaskbarSkin />
      <div className="relative flex h-[42px] w-full items-center">
        <div className="ml-[7px] flex h-[38px] w-[38px] items-center justify-center rounded-full bg-[linear-gradient(#bdb7bd,#151315_60%)]">
          <span className="h-[31px] w-[31px] rounded-full border border-[#161c26] bg-[radial-gradient(circle_at_50%_85%,#55b8ff,#2f8ce4_60%,#5795cc)]" />
        </div>
        <svg width="30" height="28" viewBox="0 0 30 28" className="ml-[120px]"><path d="M3 0h13a14 13.500 0 0 1 0 27H3q-3 0-3-3V3q0-3 3-3z" fill="#12cb7e" /><path d="M7 9h13M7 14h13M7 19h8" stroke="#064b31" strokeWidth="2" strokeLinecap="round" /></svg>
        <div className="ml-[26px]"><TaskFrame><FirefoxLogo width={31} height={31} /></TaskFrame></div>
        <svg width="33" height="30" viewBox="0 0 33 30" className="ml-[25px]">
          <path d="M1 4l3-3h8l2 3h16l2 3v21H1z" fill="#e9cf73" /><path d="M2 9h29l-1 18H2z" fill="#f8e7a0" /><path d="M14 2h6v3h-6z" fill="#d45c44" /><path d="M21 4h6v3h-6z" fill="#5a9fd8" /><path d="M5 29V17h22v12h-5v-6H10v6z" fill="#87d3ef" /><path d="M3 1h5v3H3z" fill="#6ab04c" />
        </svg>
        <div className="ml-[24px]">
          <TaskFrame>
            <svg width="31" height="21" viewBox="0 0 31 21"><path d="M0 0h31v21H0z" fill="#736fd0" /><path d="M0 4.500h31v3.500H0z" fill="#37355c" /><path d="M4 12h7v5H4z" fill="#e9c46f" /><path d="M15 13.500h12M17 17h8" stroke="#2c2a4f" strokeWidth="1.300" /></svg>
          </TaskFrame>
        </div>
        <div className="ml-auto flex items-center">
          <svg width="15" height="15" viewBox="0 0 15 15"><path d="M1 0v14" stroke="#fff" /><path d="M2 1h5l1 2h5v6H2z" fill="#f3eef3" /><rect x="6" y="6" width="9" height="9" rx="1" fill="#d8272c" /><path d="M8.500 8.500l4 4M12.500 8.500l-4 4" stroke="#fff" strokeWidth="1.500" /></svg>
          <svg width="15" height="14" viewBox="0 0 15 14" fill="none" stroke="#fff" className="ml-[9px]"><path d="M6 2.500h8.500v8H4.500V8M9 10.500v3M5.500 13.500h7M.5.500h4v4h-4zM2.500 4.500V8h2" /></svg>
          <svg width="15" height="14" viewBox="0 0 15 14" fill="none" stroke="#fff" className="ml-[9px]"><path d="M0 4.500h3l4-4v13l-4-4H0z" fill="#fff" stroke="none" /><path d="M9 4.500q1.500 2.500 0 5M11 2.500q3 4.500 0 9M13 1q4 6 0 12" /></svg>
          <div className="ml-[10px] mr-[11px] w-[82px] pt-[2px] text-center font-['Liberation_Sans',sans-serif] text-[16px] leading-5 text-[#27d6c0]">
            <p>4:11 PM</p>
            <p>8/29/2023</p>
          </div>
        </div>
      </div>
    </footer>
  )
}

export default function App() {
  return (
    <div className="relative h-[768px] w-[1024px] overflow-hidden font-['Noto_Sans',sans-serif]">
      <TabStrip />
      <NavBar />
      <BookmarksBar />
      <MeetPage />
      <Taskbar />
      <svg className="absolute left-[962px] top-[474px]" width="28" height="32" viewBox="0 0 28 32">
        <path d="M2 3l25 14-11 3-9 9z" fill="#10181d" />
        <path d="M1 1l24 14-11 3-8 10z" fill="#25cdbb" stroke="#153438" />
        <path d="M2 3l8 11-4 10M10 14l14 1M10 14l-3 2" stroke="#143f45" strokeWidth="2" fill="none" />
      </svg>
    </div>
  )
}
